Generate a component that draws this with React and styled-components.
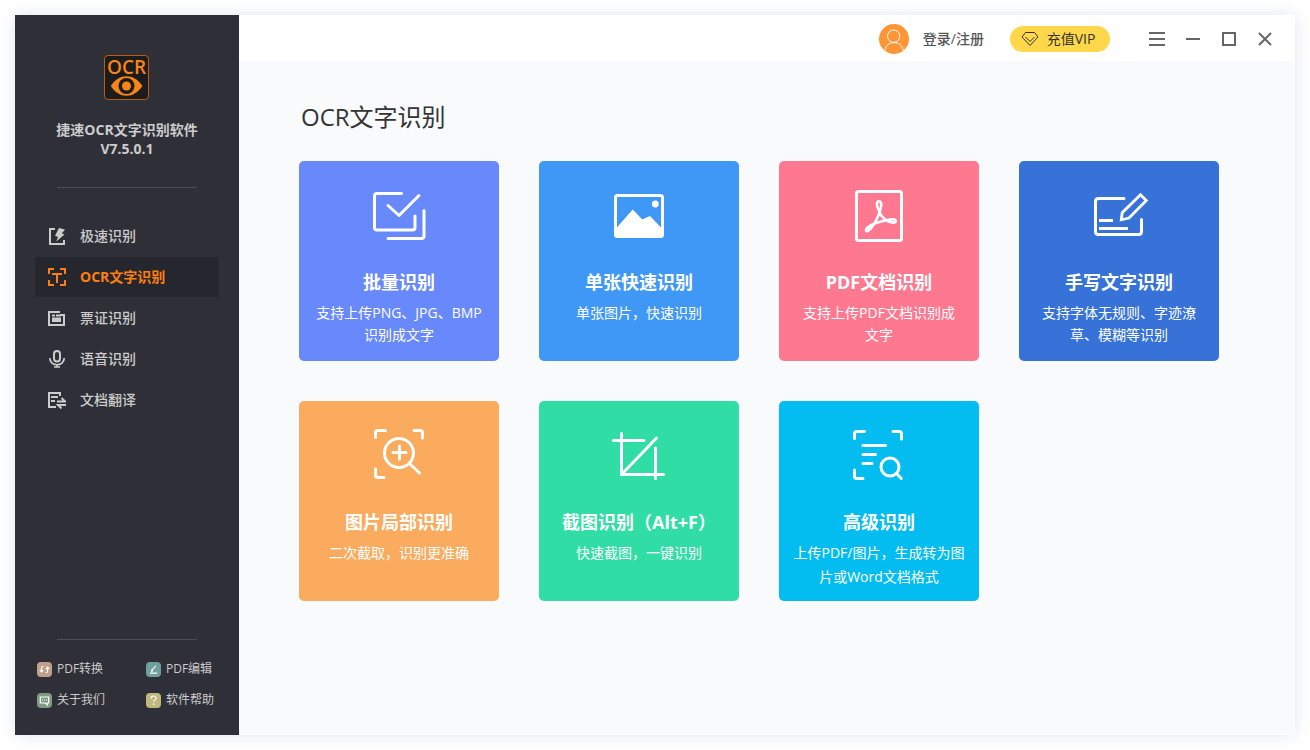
import React, { useState } from 'react';
import styled, { createGlobalStyle } from 'styled-components';

const GlobalStyle = createGlobalStyle`
  * {
    box-sizing: border-box;
  }

  body {
    margin: 0;
    background-color: #fff;
    font-family: "Open Sans", "Noto Sans CJK SC", sans-serif;
  }

  button {
    border: none;
    padding: 0;
    background: none;
    font-family: inherit;
    cursor: pointer;
  }
`;

const Page = styled.div`
  display: flex;
  min-height: 100vh;
  padding: 15px;
`;

const Window = styled.div`
  display: flex;
  flex: 1;
  border-radius: 2px;
  background-color: #fff;
  box-shadow: 0 0 15px rgba(150, 165, 180, 0.3);
`;

const Sidebar = styled.aside`
  display: flex;
  flex-direction: column;
  flex: 0 0 224px;
  padding: 40px 20px 20px;
  background-color: #2f3037;
`;

const Brand = styled.div`
  display: flex;
  flex-direction: column;
  align-items: center;
`;

const BrandName = styled.p`
  margin: 20px 0 29px;
  color: #ccc;
  font-size: 14px;
  font-weight: 700;
  line-height: 19px;
  text-align: center;
`;

const Divider = styled.hr`
  width: 140px;
  height: 1px;
  margin: 0 auto;
  border: none;
  background-color: #4d4e55;
`;

const Nav = styled.nav`
  display: flex;
  flex-direction: column;
  flex: 1;
  gap: 1px;
  margin-top: 28px;
`;

const NavItem = styled.button`
  display: flex;
  align-items: center;
  gap: 14px;
  height: 40px;
  padding: 0 13px;
  border-radius: 2px;
  background-color: ${({ $active }) => ($active ? '#26272e' : 'transparent')};
  color: ${({ $active }) => ($active ? '#ff7f0e' : '#ccc')};
  font-size: 14px;
  font-weight: ${({ $active }) => ($active ? 700 : 500)};
  line-height: 20px;
`;

const FooterLinks = styled.div`
  display: grid;
  grid-template-columns: 109px 1fr;
  row-gap: 11px;
  margin: 19px -10px 5px 2px;
`;

const FooterLink = styled.a`
  display: flex;
  align-items: center;
  gap: 5px;
  color: #ccc;
  font-size: 12px;
  line-height: 20px;
  text-decoration: none;
  white-space: nowrap;
`;

const Main = styled.main`
  display: flex;
  flex-direction: column;
  flex: 1;
  min-width: 0;
`;

const Header = styled.header`
  display: flex;
  align-items: center;
  justify-content: flex-end;
  height: 46px;
  padding: 2px 22px 0 0;
`;

const LoginButton = styled.button`
  display: flex;
  align-items: center;
  gap: 14px;
  color: #555;
  font-size: 14px;
  font-weight: 500;
  line-height: 20px;
`;

const VipButton = styled.button`
  display: flex;
  align-items: center;
  justify-content: center;
  gap: 8px;
  width: 100px;
  height: 26px;
  margin: 0 39px 0 26px;
  padding-right: 4px;
  border-radius: 13px;
  background-color: #ffd74a;
  color: #333;
  font-size: 14px;
  line-height: 20px;
`;

const WindowControls = styled.div`
  display: flex;
  gap: 20px;
`;

const ControlButton = styled.button`
  display: flex;
  width: 16px;
  height: 16px;
`;

const Content = styled.section`
  flex: 1;
  padding: 36px 60px;
  border: solid #fff;
  border-width: 0 1px 1px 0;
  background-color: #f8fafc;
`;

const PageTitle = styled.h1`
  margin: 0 0 24px 2px;
  color: #333;
  font-size: 24px;
  font-weight: 400;
  line-height: 40px;
`;

const CardGrid = styled.div`
  display: grid;
  grid-template-columns: repeat(auto-fill, 200px);
  gap: 40px;
`;

const Card = styled.button`
  display: flex;
  flex-direction: column;
  align-items: center;
  justify-content: flex-start;
  height: 200px;
  padding: 25px 12px 0;
  border-radius: 5px;
  background-color: ${({ $color }) => $color};
  color: #fff;
`;

const CardTitle = styled.span`
  margin-top: 24px;
  font-size: 18px;
  font-weight: 700;
  line-height: 24px;
  white-space: nowrap;
`;

const CardText = styled.span`
  margin-top: ${({ $loose }) => ($loose ? 7 : 8)}px;
  font-size: 14px;
  line-height: ${({ $loose }) => ($loose ? 24 : 22)}px;
  text-align: center;
  white-space: pre-line;
`;

const CardIcon = ({ children }) => (
  <svg
    width="60"
    height="60"
    viewBox="0 0 60 60"
    fill="none"
    stroke="#fff"
    strokeWidth="3"
    strokeLinecap="round"
    strokeLinejoin="round"
    aria-hidden="true"
  >
    {children}
  </svg>
);

const NavIcon = ({ children }) => (
  <svg width="18" height="18" viewBox="0 0 18 18" fill="none" stroke="currentColor" strokeWidth="2" aria-hidden="true">
    {children}
  </svg>
);

const SmallIcon = ({ color, children }) => (
  <svg width="15" height="15" viewBox="0 0 15 15" fill="none" stroke="#fff" strokeWidth="1.2" aria-hidden="true">
    <rect width="15" height="15" rx="4" fill={color} stroke="none" />
    {children}
  </svg>
);

const ControlIcon = ({ children }) => (
  <svg width="16" height="16" viewBox="0 0 16 16" fill="none" stroke="#666" strokeWidth="2" aria-hidden="true">
    {children}
  </svg>
);

const Logo = () => (
  <svg width="46" height="45" viewBox="0 0 46 45">
    <rect x="0.5" y="0.5" width="44" height="44" rx="3.5" fill="#1c1c1c" stroke="#b85f10" />
    <text x="22.5" y="18.5" fill="#f98419" fontSize="19" fontWeight="600" textAnchor="middle">OCR</text>
    <path d="M6.8 31C15 18 30 18 38.4 31C30 44 15 44 6.8 31Z" fill="#f98419" />
    <circle cx="22.5" cy="31" r="8" fill="#1c1c1c" />
    <circle cx="22.5" cy="31" r="4.5" fill="#f98419" />
  </svg>
);

const navItems = [
  {
    label: '极速识别',
    icon: (
      <>
        <path d="M7 2H2V17H16V13" />
        <path d="M11 1L17 2.5L13.8 6.5L16.5 7.5L8.3 14.5L10 10L7 8.8Z" fill="currentColor" stroke="none" />
      </>
    ),
  },
  {
    label: 'OCR文字识别',
    icon: <path d="M1 6V1H6M12 1H17V6M17 12V17H12M6 17H1V12M4 6H14M9 6V15" />,
  },
  {
    label: '票证识别',
    icon: (
      <>
        <path d="M12 3H1V16H16V6H12" />
        <path d="M4 8.5H13V13H4ZM4 5.5H7V7.5H4ZM8 5.5H13V7.5H8Z" fill="currentColor" stroke="none" />
      </>
    ),
  },
  {
    label: '语音识别',
    icon: (
      <>
        <rect x="6" y="1" width="6" height="10.5" rx="3" strokeWidth="2" />
        <path d="M1.8 8C1.8 17 16.2 17 16.2 8M9 14.5V17M6 17H12" strokeWidth="1.7" />
      </>
    ),
  },
  {
    label: '文档翻译',
    icon: (
      <>
        <path d="M12 5V2H1V16H8M3 6H10M3 10H7" />
        <path d="M9 10.5H17L13.5 7M18 14H10L13.5 17.5" strokeWidth="2" />
      </>
    ),
  },
];

const footerLinks = [
  {
    label: 'PDF转换',
    color: '#c09f8b',
    icon: <path d="M6.5 4.5H5.5Q4.5 4.5 4.5 6V10M2.7 8.2L4.5 10L6.3 8.2M8.5 10.5H9.5Q10.5 10.5 10.5 9V5M8.7 6.8L10.5 5L12.3 6.8" />,
  },
  {
    label: 'PDF编辑',
    color: '#70a09e',
    icon: <path d="M4 11.2H11.2M5.3 8.6L10 3.8M5 9.2L7 8.8" />,
  },
  {
    label: '关于我们',
    color: '#7f9b83',
    icon: <path d="M3.3 4H11.7V10H10.5V12L8.2 10H3.3ZM5 7H6M7 7H8M9 7H10" />,
  },
  {
    label: '软件帮助',
    color: '#bfba7b',
    icon: <path d="M5 5.5C5 2.3 10.2 2.3 10.2 5.3C10.2 7 7.6 7 7.6 9M7.6 10.5V12" />,
  },
];

const cards = [
  {
    title: '批量识别',
    text: '支持上传PNG、JPG、BMP\n识别成文字',
    color: '#6889fc',
    icon: (
      <>
        <path d="M32.5 7.5H8Q5.5 7.5 5.5 10V41.5Q5.5 44 8 44H43.5Q46 44 46 41.5V30" />
        <path d="M19 52.5H52.5Q55 52.5 55 50V24.5M19 19.5L30 29.5L50 9.5" />
      </>
    ),
  },
  {
    title: '单张快速识别',
    text: '单张图片，快速识别',
    color: '#3f98f6',
    icon: (
      <>
        <rect x="6.5" y="9.5" width="47" height="41" rx="2" />
        <path d="M7 42.5L23.7 23.5L33.3 33.5L41 30L53 42.5V51H7Z" fill="#fff" stroke="none" />
        <circle cx="46.3" cy="18" r="3.4" fill="#fff" stroke="none" />
      </>
    ),
  },
  {
    title: 'PDF文档识别',
    text: '支持上传PDF文档识别成\n文字',
    color: '#fe788f',
    icon: (
      <>
        <rect x="7.5" y="5.5" width="45" height="49" rx="2" />
        <path
          d="M30 25C27.3 19 27.3 15.3 30 15.3C32.8 15.3 32.8 19 31 25C29 31 26 37 23 41C20 45 17.5 46 17 44.5C16.5 43 20 39.5 27 37C34 35 40 33.3 44 33.3C48 33.3 47.8 36.6 44 36.6C38 36.6 32 31 30 25Z"
          strokeWidth="2.6"
        />
      </>
    ),
  },
  {
    title: '手写文字识别',
    text: '支持字体无规则、字迹潦\n草、模糊等识别',
    color: '#3672d7',
    icon: (
      <>
        <path d="M35 12.5H9.5Q6.5 12.5 6.5 15.5V45.5Q6.5 48.5 9.5 48.5H49.5Q52.5 48.5 52.5 45.5V33.5" />
        <path d="M10 34.5H24M10 42.5H39" strokeLinecap="butt" />
        <path d="M51.5 8.7L57.3 14.5L40 32L32.3 33.8L33.2 26.7Z" strokeLinejoin="miter" strokeWidth="2.8" />
      </>
    ),
  },
  {
    title: '图片局部识别',
    text: '二次截取，识别更准确',
    color: '#faab5e',
    icon: (
      <>
        <path d="M6.5 11.5V7Q6.5 4.5 9 4.5H16.5M45 4.5H51Q53.5 4.5 53.5 7V12M6.5 43V49Q6.5 51.5 9 51.5H15" />
        <circle cx="30" cy="27" r="14.5" />
        <path d="M41.5 38.5L50.5 47M24 26.5H37M30.5 20V33" />
      </>
    ),
  },
  {
    title: '截图识别（Alt+F）',
    text: '快速截图，一键识别',
    color: '#30dda4',
    icon: (
      <path
        d="M12.5 7.5V48.5H54.5M4.5 14.5H35M46.5 22V52.5M13.5 47.5L47.5 12"
        strokeLinejoin="miter"
      />
    ),
  },
  {
    title: '高级识别',
    text: '上传PDF/图片，生成转为图\n片或Word文档格式',
    color: '#03bdf0',
    loose: true,
    icon: (
      <>
        <path d="M5.5 12.5V8Q5.5 5.5 8 5.5H15.5M44 5.5H50Q52.5 5.5 52.5 8V13M5.5 44V50Q5.5 52.5 8 52.5H14" />
        <path d="M14 19.5H36.5M14 28.5H26.5M14 37.5H23" />
        <circle cx="41" cy="41" r="9" />
        <path d="M48 48L52.3 52.5" />
      </>
    ),
  },
];

const App = () => {
  const [active, setActive] = useState('OCR文字识别');

  return (
    <>
      <GlobalStyle />
      <Page>
        <Window>
          <Sidebar>
            <Brand>
              <Logo />
              <BrandName>
                捷速OCR文字识别软件
                <br />
                V7.5.0.1
              </BrandName>
            </Brand>
            <Divider />
            <Nav>
              {navItems.map((item) => (
                <NavItem key={item.label} $active={item.label === active} onClick={() => setActive(item.label)}>
                  <NavIcon>{item.icon}</NavIcon>
                  {item.label}
                </NavItem>
              ))}
            </Nav>
            <Divider />
            <FooterLinks>
              {footerLinks.map((link) => (
                <FooterLink key={link.label} href="#">
                  <SmallIcon color={link.color}>{link.icon}</SmallIcon>
                  {link.label}
                </FooterLink>
              ))}
            </FooterLinks>
          </Sidebar>

          <Main>
            <Header>
              <LoginButton>
                <svg width="30" height="30" viewBox="0 0 30 30" fill="none" stroke="#fff" aria-hidden="true">
                  <circle cx="15" cy="15" r="15" fill="#ff9535" stroke="none" />
                  <circle cx="14.7" cy="12.2" r="6.2" />
                  <path d="M6 26.5C6.5 16 23.5 16 24 26.5" />
                </svg>
                登录/注册
              </LoginButton>
              <VipButton>
                <svg width="18" height="16" viewBox="0 0 18 16" fill="none" stroke="#333" aria-hidden="true">
                  <path d="M4.5 1.5H13.5L17 6L9 14.5L1 6ZM4.5 6L9 10.5L13.5 6" />
                </svg>
                充值VIP
              </VipButton>
              <WindowControls>
                <ControlButton aria-label="菜单">
                  <ControlIcon><path d="M0 2H16M0 8H16M0 14H16" /></ControlIcon>
                </ControlButton>
                <ControlButton aria-label="最小化">
                  <ControlIcon><path d="M1 8H15" /></ControlIcon>
                </ControlButton>
                <ControlButton aria-label="最大化">
                  <ControlIcon><rect x="2" y="2" width="12" height="12" /></ControlIcon>
                </ControlButton>
                <ControlButton aria-label="关闭">
                  <ControlIcon><path d="M2 2L14 14M14 2L2 14" /></ControlIcon>
                </ControlButton>
              </WindowControls>
            </Header>

            <Content>
              <PageTitle>OCR文字识别</PageTitle>
              <CardGrid>
                {cards.map((card) => (
                  <Card key={card.title} $color={card.color}>
                    <CardIcon>{card.icon}</CardIcon>
                    <CardTitle>{card.title}</CardTitle>
                    <CardText $loose={card.loose}>{card.text}</CardText>
                  </Card>
                ))}
              </CardGrid>
            </Content>
          </Main>
        </Window>
      </Page>
    </>
  );
};

export default App;
